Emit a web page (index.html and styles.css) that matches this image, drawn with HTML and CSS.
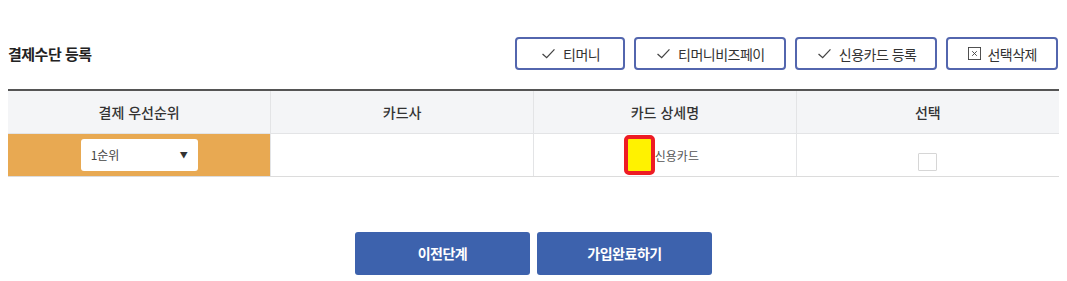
FILE: index.html
```html
<!DOCTYPE html>
<html lang="ko">
<head>
<meta charset="utf-8">
<link rel="stylesheet" href="styles.css">
</head>
<body>
<div class="page">
  <div class="head">
    <h2 class="title">결제수단 등록</h2>
    <div class="actions">
      <button class="btn-line"><svg class="ico" viewBox="0 0 16 12"><path d="M1.5 6.5 L6 10.5 L14.5 1.5" fill="none" stroke="#444" stroke-width="1.4"/></svg>티머니</button>
      <button class="btn-line"><svg class="ico" viewBox="0 0 16 12"><path d="M1.5 6.5 L6 10.5 L14.5 1.5" fill="none" stroke="#444" stroke-width="1.4"/></svg>티머니비즈페이</button>
      <button class="btn-line"><svg class="ico" viewBox="0 0 16 12"><path d="M1.5 6.5 L6 10.5 L14.5 1.5" fill="none" stroke="#444" stroke-width="1.4"/></svg>신용카드 등록</button>
      <button class="btn-line"><svg class="ico box" viewBox="0 0 14 14"><rect x="0.5" y="0.5" width="13" height="13" fill="none" stroke="#444" stroke-width="1"/><path d="M4.5 4.5 L9.5 9.5 M9.5 4.5 L4.5 9.5" stroke="#444" stroke-width="1"/></svg>선택삭제</button>
    </div>
  </div>

  <table class="grid">
    <thead>
      <tr>
        <th>결제 우선순위</th>
        <th>카드사</th>
        <th>카드 상세명</th>
        <th>선택</th>
      </tr>
    </thead>
    <tbody>
      <tr>
        <td class="prio">
          <div class="select"><span>1순위</span><span class="arrow">&#9660;</span></div>
        </td>
        <td></td>
        <td class="detail"><span class="mark"></span><span>신용카드</span></td>
        <td><span class="chk"></span></td>
      </tr>
    </tbody>
  </table>

  <div class="foot">
    <button class="btn-solid">이전단계</button>
    <button class="btn-solid">가입완료하기</button>
  </div>
</div>
</body>
</html>
```

FILE: styles.css
```css
* { box-sizing: border-box; }
body {
  margin: 8px;
  font-family: "Noto Sans CJK KR", "Noto Sans", sans-serif;
  color: #333;
  background: #fff;
}
.page { padding-top: 29px; }
.head {
  display: flex;
  align-items: center;
  justify-content: space-between;
  margin-bottom: 19px;
}
.title {
  margin: 0;
  font-size: 15px;
  font-weight: 700;
  color: #222;
  letter-spacing: -0.5px;
}
.actions {
  display: flex;
  gap: 9px;
  padding-right: 1px;
}
.btn-line {
  display: flex;
  align-items: center;
  justify-content: center;
  min-width: 110px;
  height: 33px;
  padding: 0 19px 0 20px;
  border: 2px solid #5366ae;
  border-radius: 4px;
  background: #fff;
  font-family: inherit;
  font-size: 14px;
  color: #333;
  letter-spacing: -0.5px;
}
.ico { width: 15px; height: 11px; margin-right: 7px; }
.ico.box { width: 13px; height: 13px; margin-right: 6px; }
.grid {
  width: 100%;
  border-collapse: collapse;
  table-layout: fixed;
  border-top: 2px solid #555;
}
.grid th {
  height: 43px;
  background: #f4f5f7;
  font-size: 14px;
  font-weight: 500;
  color: #333;
  border-left: 1px solid #e3e4e6;
  border-bottom: 1px solid #e3e4e6;
}
.grid th:first-child, .grid td:first-child { border-left: none; }
.grid td {
  height: 42px;
  text-align: center;
  font-size: 12px;
  color: #555;
  border-left: 1px solid #e3e4e6;
  border-bottom: 1px solid #dcdcdc;
  vertical-align: middle;
}
.grid td.prio { background: #e8a952; }
.select {
  display: flex;
  align-items: center;
  justify-content: space-between;
  width: 117px;
  height: 32px;
  margin: 0 auto;
  padding: 0 10px;
  background: #fff;
  border-radius: 3px;
  color: #444;
  font-size: 12px;
}
.arrow { font-size: 8px; color: #333; }
.detail span { vertical-align: middle; }
.mark {
  display: inline-block;
  width: 31px;
  height: 40px;
  background: #fff200;
  border: 4px solid #ee1c24;
  border-radius: 5px;
  margin-left: -7px;
}
.chk {
  display: inline-block;
  width: 19px;
  height: 18px;
  border: 1px solid #d6d6d6;
  border-radius: 1px;
  margin-top: 15px;
  vertical-align: middle;
}
.foot {
  display: flex;
  justify-content: center;
  gap: 7px;
  margin-top: 55px;
}
.btn-solid {
  width: 175px;
  height: 43px;
  border: none;
  border-radius: 3px;
  background: #3d62ad;
  color: #fff;
  font-family: inherit;
  font-size: 14px;
  font-weight: 700;
  letter-spacing: -0.5px;
}
```
